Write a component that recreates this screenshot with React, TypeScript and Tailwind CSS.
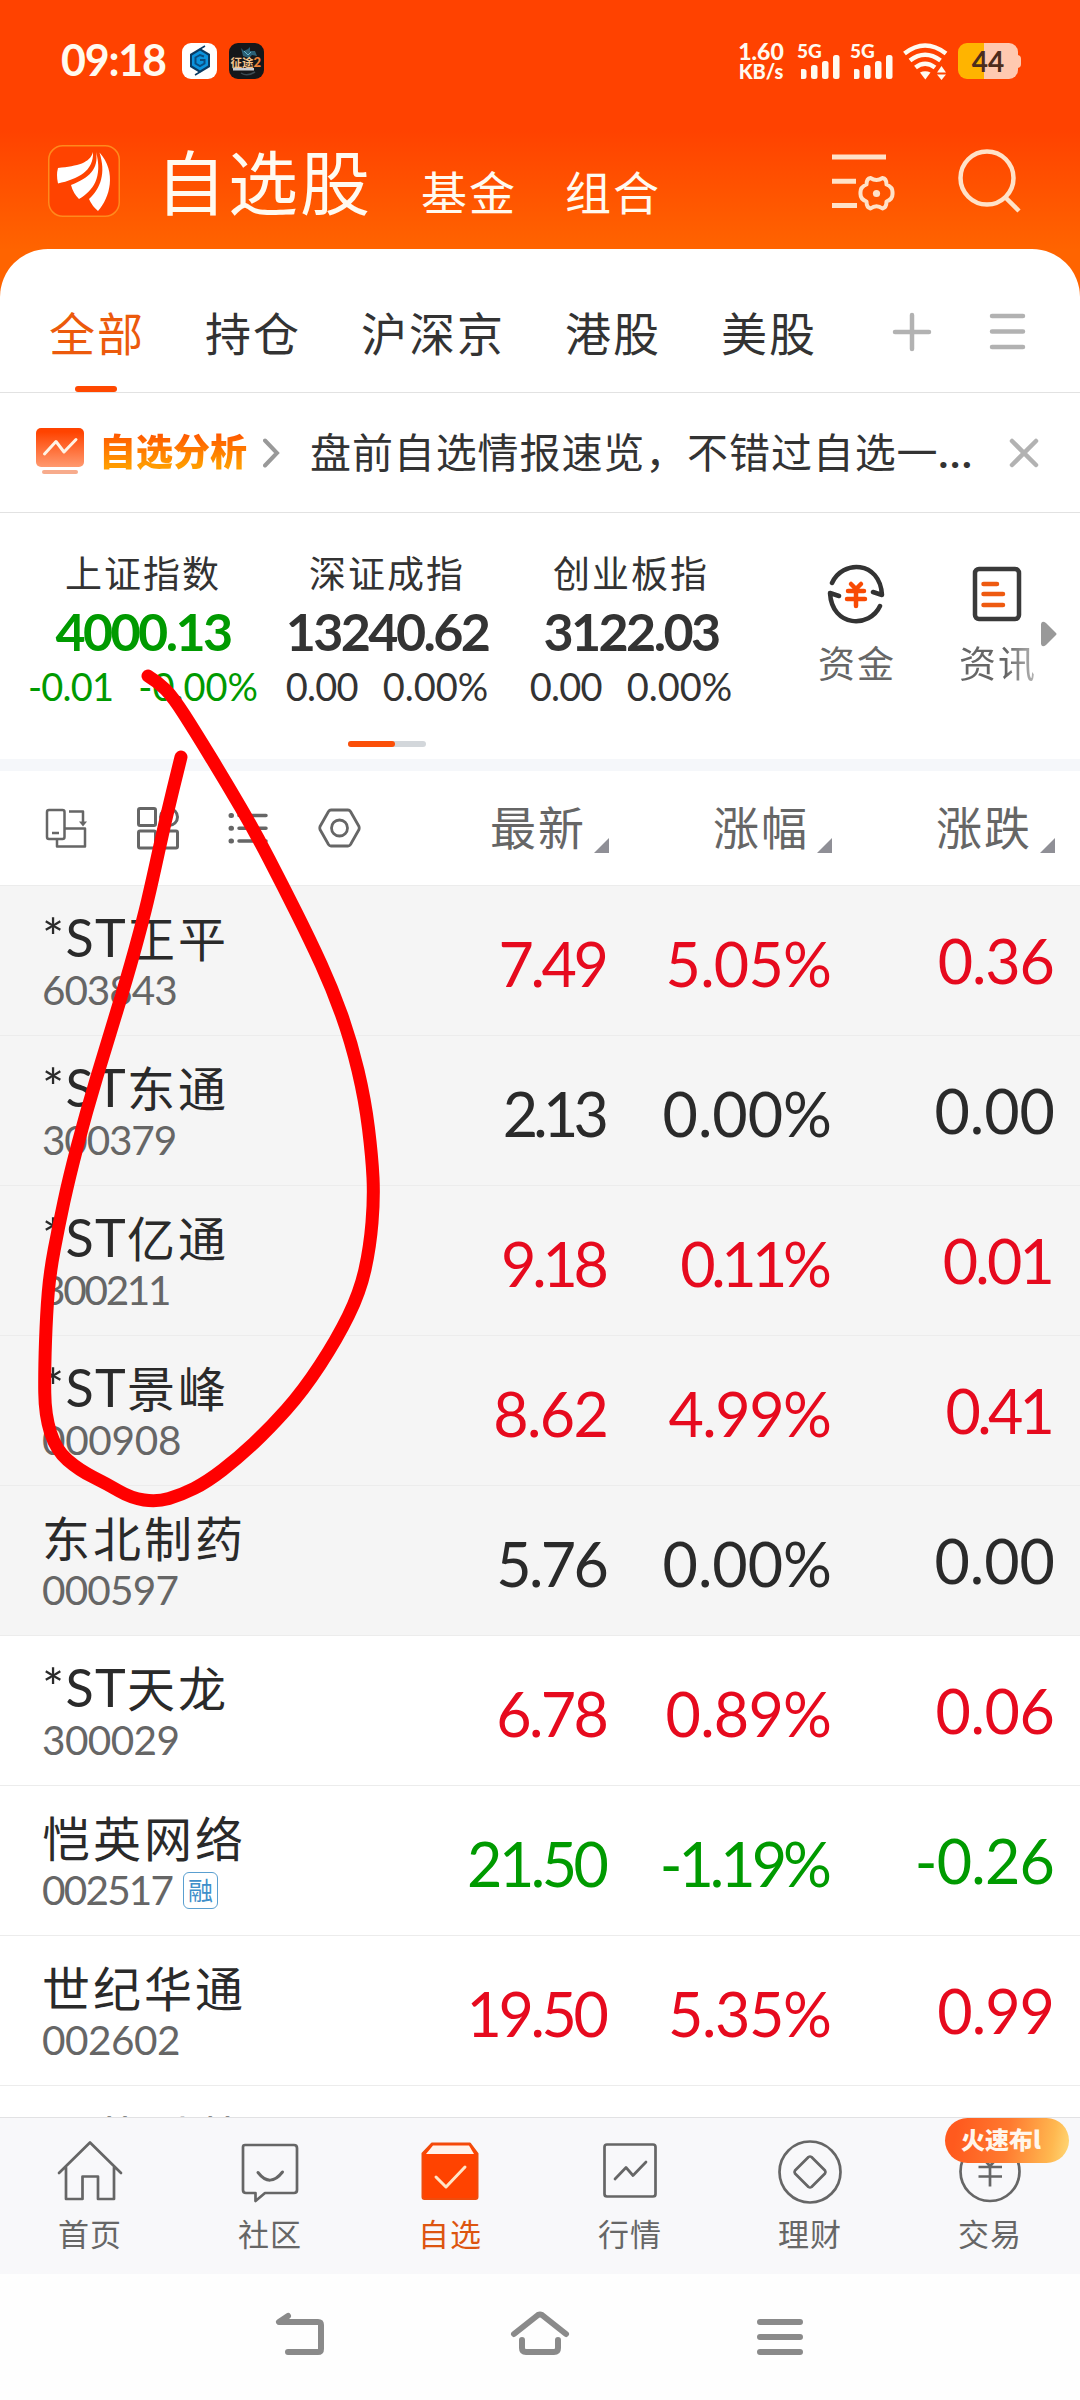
import { ReactNode } from 'react';
import clsx from 'clsx';

interface Quote {
  name: string;
  code: string;
  price: string;
  percent: string;
  change: string;
  trend: 'up' | 'down' | 'flat';
  pinned?: boolean;
  margin?: boolean;
}

const quotes: Quote[] = [
  { name: '*ST正平', code: '603843', price: '7.49', percent: '5.05%', change: '0.36', trend: 'up', pinned: true },
  { name: '*ST东通', code: '300379', price: '2.13', percent: '0.00%', change: '0.00', trend: 'flat', pinned: true },
  { name: '*ST亿通', code: '300211', price: '9.18', percent: '0.11%', change: '0.01', trend: 'up', pinned: true },
  { name: '*ST景峰', code: '000908', price: '8.62', percent: '4.99%', change: '0.41', trend: 'up', pinned: true },
  { name: '东北制药', code: '000597', price: '5.76', percent: '0.00%', change: '0.00', trend: 'flat', pinned: true },
  { name: '*ST天龙', code: '300029', price: '6.78', percent: '0.89%', change: '0.06', trend: 'up' },
  { name: '恺英网络', code: '002517', price: '21.50', percent: '-1.19%', change: '-0.26', trend: 'down', margin: true },
  { name: '世纪华通', code: '002602', price: '19.50', percent: '5.35%', change: '0.99', trend: 'up' },
];

const indices = [
  { name: '上证指数', value: '4000.13', change: '-0.01', percent: '-0.00%', color: 'text-[#009a00]' },
  { name: '深证成指', value: '13240.62', change: '0.00', percent: '0.00%', color: 'text-[#333333]' },
  { name: '创业板指', value: '3122.03', change: '0.00', percent: '0.00%', color: 'text-[#333333]' },
];

const trendColor = {
  up: 'text-[#e60a1e]',
  down: 'text-[#009a00]',
  flat: 'text-[#2a2a2a]',
};

const NUM = "font-['Lato','Noto_Sans_CJK_SC',sans-serif]";

// Lato digits are tabular, so tighten values that hold narrow digits (in em)
const narrow: Record<string, number> = {
  '1': 0.18, '7': 0.1, '4': 0.06, '3': 0.05, '2': 0.04, '5': 0.03, '8': 0.03, '9': 0.03, '6': 0.02,
};

function digitSpacing(value: string) {
  let sum = 0;
  for (const ch of value) sum += narrow[ch] ?? 0;
  return sum / value.length;
}

function Digits({ value, className, scale = 1 }: { value: string; className?: string; scale?: number }) {
  const em = digitSpacing(value) * scale;
  return (
    <span className={className} style={{ letterSpacing: `${-em}em`, paddingRight: `${em}em` }}>
      {value}
    </span>
  );
}

// points of the hand-drawn marker loop
const loop = [
  [148, 676], [158, 682], [173, 697], [196, 733], [227, 784], [255, 832], [283, 886], [310, 940], [332, 988], [351, 1041],
  [365, 1100], [372, 1157], [374, 1198], [370, 1247], [360, 1292], [337, 1339], [303, 1391], [269, 1429], [238, 1458],
  [207, 1482], [181, 1495], [157, 1502], [131, 1498], [107, 1484], [79, 1470], [56, 1450], [45, 1415], [44.500, 1370],
  [46.5, 1313], [50, 1272], [58.5, 1227], [69, 1178], [86, 1113], [107, 1043], [127, 978], [143, 920], [152, 882],
  [165, 822], [181, 757],
];

function smooth(points: number[][]) {
  let d = `M${points[0][0]} ${points[0][1]}`;
  for (let i = 1; i < points.length - 1; i++) {
    const [x, y] = points[i];
    const [nx, ny] = points[i + 1];
    d += ` Q${x} ${y} ${(x + nx) / 2} ${(y + ny) / 2}`;
  }
  const last = points[points.length - 1];
  return `${d} L${last[0]} ${last[1]}`;
}

function Signal() {
  return (
    <div className="relative w-[42px] h-[36px]">
      <span className={`absolute left-[-4px] top-0 text-[19px] leading-[15px] font-black ${NUM}`}>5G</span>
      <svg className="absolute inset-0" width="42" height="36" viewBox="0 0 42 36" fill="currentColor">
        <rect x="-1" y="26" width="6.500" height="10" rx="2.500" />
        <rect x="10" y="22" width="6.500" height="14" rx="2.500" />
        <rect x="21" y="18" width="6.500" height="18" rx="2.500" />
        <rect x="32" y="12" width="6.500" height="24" rx="2.500" />
      </svg>
    </div>
  );
}

function StatusBar() {
  return (
    <div className="h-[122px] pl-[61px] pr-[62px] flex items-center text-[#fffaf0]">
      <span className={`w-[121px] pb-1 text-[43px] leading-none tracking-[-1.200px] font-bold ${NUM}`}>09:18</span>
      <svg width="35" height="36" viewBox="0 0 35 36">
        <rect width="35" height="36" rx="9" fill="#fff" />
        <path d="M18 5 L28 11 V24 L18 30 L8 24 V11 Z" fill="#0a3b63" />
        <path d="M18 7.500 L26 12.500 V22.500 L18 27.500 L10 22.500 V12.500 Z" fill="#0b93dd" />
        <path d="M22 13.500 L18 12 L13.500 14.500 V20.500 L18 23 L22.500 20.500 V17 H18" fill="none" stroke="#0a4d80" strokeWidth="2" />
        <path d="M23 3 L18 6 M13 32 L18 29" stroke="#0a3b63" strokeWidth="1.500" />
      </svg>
      <svg className="ml-3" width="35" height="36" viewBox="0 0 35 36">
        <rect width="35" height="36" rx="9" fill="#15171a" />
        <path d="M12 5 L15 8 L19 6 L21 4 L21 8 L26 8 L28 13 L23 12 L20 15 L14 13 Z" fill="#2b6076" />
        <path d="M15 8 L19 12 L22 9" stroke="#69b6cf" fill="none" />
        <path d="M12 30 Q18 34 26 29" stroke="#3b4a52" strokeWidth="1.500" fill="none" />
        <text x="1.500" y="24" fontSize="11.500" fontWeight="700" fill="#f3c48c" fontFamily="Noto Sans CJK SC">征途</text>
        <text x="24.500" y="24" fontSize="13" fontWeight="900" fill="#f08238" fontFamily="Lato">2</text>
        <rect x="4" y="25" width="21" height="2.500" fill="#c9ccd0" />
      </svg>
      <div className={`ml-auto w-[62px] text-center text-[23px] leading-[20px] font-black ${NUM}`}>
        <div>1.60</div>
        <div className="text-[20px]">KB/s</div>
      </div>
      <div className="ml-[9px]"><Signal /></div>
      <div className="ml-[11px]"><Signal /></div>
      <svg className="mr-[2px] ml-[7px]" width="45" height="37" viewBox="0 0 45 37" fill="none" stroke="currentColor" strokeWidth="4.500">
        <path d="M1.500 10.500 Q22 -5.500 43 10.500" />
        <path d="M7 17.500 Q22 6 37.500 17.500" />
        <path d="M12.500 24.500 Q22 17 32 24.500" />
        <path d="M17 29.500 Q22 27 27.500 29.500 L22.300 36.500 Z" fill="currentColor" stroke="none" />
        <path d="M38.500 23 L43 29.500 H34 Z M38.500 37 L43 31.500 H34 Z" fill="currentColor" stroke="none" />
      </svg>
      <div className="relative ml-2 w-[60px] h-[36px] rounded-[9px] bg-[linear-gradient(90deg,#ffb400_26px,#ffc9b0_26px)] flex items-center justify-center">
        <span className={`text-[28px] leading-none font-bold text-[#4d2d1c] ${NUM}`}>44</span>
        <span className="absolute right-[-3px] top-3 w-[4px] h-[13px] rounded-r bg-[#ffc9b0]" />
      </div>
    </div>
  );
}

function Header() {
  return (
    <div className="h-[127px] px-12 flex text-[#fffaf0]">
      <svg className="mt-[23px]" width="72" height="72" viewBox="0 0 72 72">
        <rect x="0.750" y="0.750" width="70.500" height="70.500" rx="14" fill="#ff4300" stroke="#ff8a1c" strokeWidth="1.500" />
        <path d="M45 7 C42 18 30 21 10 23 Q8 30 10 38.500 C30 34 46 26 45 7 Z" fill="#fff" />
        <path d="M48 7 C51 24 41 33 23 40 Q25 48 31 54 C45 46 55 32 48 7 Z" fill="#fff" />
        <path d="M51.500 7.500 C58 28 53 43 41 54 Q44 61 50 66 C62 53 69 27 51.500 7.500 Z" fill="#fff" />
      </svg>
      <div className="ml-[36px] mt-[22px] w-[217px] text-[70px] leading-[72px] tracking-[2px]">自选股</div>
      <div className="ml-[48px] mt-[44px] text-[46px] leading-[48px] tracking-[2px] flex gap-[48px]">
        <span>基金</span>
        <span>组合</span>
      </div>
      <svg className="ml-auto mt-[31px]" width="64" height="60" viewBox="0 0 64 60" fill="none" stroke="#ffe2c8" strokeWidth="5">
        <path d="M1 4 H55 M1 28.300 H25 M1 52.500 H26" />
        <path
          d="M39.500 25 Q45.500 29 51.500 25 Q55.500 25.500 55.500 31.500 Q62 34 61.500 40 Q62 46 55.500 48.500 Q55.500 54.500 51.500 55.500 Q45.500 51 39.500 55.500 Q35.500 54.500 35.500 48.500 Q29 46 29.500 40 Q29 34 35.500 31.500 Q35.500 25.500 39.500 25 Z"
          strokeWidth="4"
          strokeLinejoin="round"
        />
        <circle cx="45.500" cy="40.500" r="3.600" fill="#ffe2c8" stroke="none" />
      </svg>
      <svg className="ml-[63px] mt-[27px] mr-[10px]" width="64" height="64" viewBox="0 0 64 64" fill="none" stroke="#ffe2c8" strokeWidth="4.500">
        <circle cx="29" cy="29" r="26.500" />
        <path d="M47 48 L61 62" />
      </svg>
    </div>
  );
}

function Tabs() {
  return (
    <div className="h-[144px] border-b border-[#e2e2e2] pl-[49px] pt-[58px] flex items-start gap-[60px] text-[46px] leading-[48px] tracking-[2px] text-[#333333]">
      <div className="relative text-[#ec5a0c]">
        全部
        <span className="absolute left-[26px] top-[79px] w-[42px] h-[6px] rounded-full bg-[#ff4800]" />
      </div>
      <div>持仓</div>
      <div>沪深京</div>
      <div>港股</div>
      <div>美股</div>
      <svg className="ml-[15px] mt-[5px]" width="40" height="40" viewBox="0 0 40 40" stroke="#b2b2b2" strokeWidth="4.500" strokeLinecap="round">
        <path d="M3 20 H37 M20 3 V37" />
      </svg>
      <svg className="ml-[-4px] mt-[5px]" width="40" height="40" viewBox="0 0 40 40" stroke="#b2b2b2" strokeWidth="4.500" strokeLinecap="round">
        <path d="M4 4 H35 M4 19.500 H35 M4 35 H35" />
      </svg>
    </div>
  );
}

function AnalysisBar() {
  return (
    <div className="h-[120px] border-b border-[#e2e2e2] pl-9 pr-[41px] flex items-center">
      <svg className="mb-[3px]" width="48" height="47" viewBox="0 0 48 47">
        <defs>
          <linearGradient id="chartFill" x1="0" y1="0" x2="0" y2="1">
            <stop offset="0.1" stopColor="#ff4300" />
            <stop offset="1" stopColor="#ff9a70" />
          </linearGradient>
        </defs>
        <rect x="0" y="0" width="48" height="39" rx="5" fill="url(#chartFill)" />
        <path d="M8.500 26 L20 13.500 L28 24 L40 11.500" fill="none" stroke="#fff3e6" strokeWidth="3" strokeLinecap="round" strokeLinejoin="round" />
        <rect x="6" y="42" width="36" height="4" rx="2" fill="#f7ab8c" />
      </svg>
      <div className="ml-[15px] pb-[6px] w-[150px] text-[37px] leading-[46px] font-black whitespace-nowrap bg-[linear-gradient(180deg,#ff5500_10%,#ff9c00_75%)] bg-clip-text text-transparent">
        自选分析
      </div>
      <svg className="ml-[14px]" width="18" height="30" viewBox="0 0 18 30" fill="none" stroke="#999999" strokeWidth="4">
        <path d="M2 2.500 L14 15 L2 27.500" strokeLinecap="round" />
      </svg>
      <div className="ml-[29px] pb-[3px] text-[41px] tracking-[0.900px] leading-none text-[#333333] whitespace-nowrap">
        盘前自选情报速览，不错过自选一<span className="tracking-[2px] font-bold font-['Lato']">...</span>
      </div>
      <svg className="ml-auto" width="30" height="30" viewBox="0 0 30 30" stroke="#b2b2b2" strokeWidth="4.500" strokeLinecap="round">
        <path d="M3 3 L27 27 M27 3 L3 27" />
      </svg>
    </div>
  );
}

function IndexBoard() {
  return (
    <div className="relative h-[246px] pl-[21px] flex">
      {indices.map((item) => (
        <div key={item.name} className="w-[244px] pt-[39px] flex flex-col items-center whitespace-nowrap">
          <div className="text-[37px] leading-[40px] tracking-[2px] text-[#333333]">{item.name}</div>
          <div className={clsx('mt-[14px] text-[52px] leading-[50px] tracking-[-2.600px] font-bold', NUM, item.color)}>{item.value}</div>
          <div className={clsx('mt-[10px] text-[38px] leading-[40px] flex gap-[25px]', NUM, item.color)}>
            <span className="tracking-[-0.800px]">{item.change}</span>
            <span>{item.percent}</span>
          </div>
        </div>
      ))}
      <div className="ml-[64px] pt-[51px] w-[78px] flex flex-col items-center text-[37px] leading-[40px] tracking-[2px] whitespace-nowrap text-[#666666]">
        <svg width="60" height="60" viewBox="0 0 60 60" fill="none" stroke="#333333" strokeWidth="4.500" strokeLinecap="round" strokeLinejoin="round">
          <path d="M6 19 C16 -4 54 -4 56 31 L47 28" />
          <path d="M54 42 C44 64 6 64 4 29 L13 32" />
          <path d="M25 20 L30 25 L35 20 M22 27 H38 M21 35 H39 M30 25 V42" stroke="#f84a04" />
        </svg>
        <span className="mt-[18px] ml-[2px]">资金</span>
      </div>
      <div className="ml-[63px] pt-[51px] w-[78px] flex flex-col items-center text-[37px] leading-[40px] tracking-[2px] whitespace-nowrap">
        <svg width="60" height="60" viewBox="0 0 60 60" fill="none" stroke="#3a3a3a" strokeWidth="4.500" strokeLinecap="round">
          <rect x="8" y="5" width="44" height="50" rx="4" />
          <path d="M16.500 20 H30 M16.500 30 H36 M16.500 41 H36" stroke="#ee5a10" />
        </svg>
        <span className="mt-[18px] ml-[2px] bg-[linear-gradient(90deg,#666666_60%,#bbbbbb)] bg-clip-text text-transparent">资讯</span>
      </div>
      <svg className="ml-[5px] mt-[108px]" width="16" height="26" viewBox="0 0 16 26">
        <path d="M0 3 Q1 -1 5 2 L15 12 Q16 13 15 14 L5 24 Q1 27 0 23 Z" fill="#999999" />
      </svg>
      <div className="absolute left-[348px] top-[228px] w-[78px] h-[6px] rounded-full bg-[#d3d7db]">
        <div className="w-[47px] h-[6px] rounded-full bg-[#fb4f08]" />
      </div>
    </div>
  );
}

function SortLabel({ children }: { children: ReactNode }) {
  return (
    <div className="w-[223px] flex justify-end text-[46px] leading-[48px] tracking-[2px] text-[#666666]">
      <span className="mt-[-3px]">{children}</span>
      <svg className="ml-[8px] mt-[34px]" width="15" height="15" viewBox="0 0 15 15">
        <path d="M15 0 V15 H0 Z" fill="#8f8f96" />
      </svg>
    </div>
  );
}

function TableHeader() {
  return (
    <div className="h-[115px] border-b border-[#ececec] pl-[45px] pr-[25px] flex items-center">
      <div className="flex gap-[48px]">
        <svg width="43" height="44" viewBox="0 0 43 44" fill="none" stroke="#666666" strokeWidth="2.500" strokeLinejoin="round">
          <rect x="2" y="4" width="17.500" height="29" rx="2" />
          <path d="M7 27 H14 M24 5.500 H38 V18" />
          <path d="M34 15.500 H42 L38 20.500 Z" fill="#666666" stroke="none" />
          <path d="M19.500 22.500 H40 V40.500 H12 V33" />
        </svg>
        <svg width="43" height="44" viewBox="0 0 43 44" fill="none" stroke="#666666" strokeWidth="3">
          <rect x="2.500" y="2.500" width="17" height="17" rx="1.500" />
          <circle cx="33" cy="11" r="8.500" />
          <rect x="2.500" y="25" width="17" height="17" rx="1.500" />
          <rect x="24.500" y="25" width="17" height="17" rx="1.500" />
        </svg>
        <svg width="43" height="44" viewBox="0 0 43 44" fill="none" stroke="#666666" strokeWidth="3.500" strokeLinecap="round">
          <path d="M12 9.500 H39 M12 22.300 H39 M12 35 H39" />
          <path d="M4 9.500 h0.500 M4 22.300 h0.500 M4 35 h0.500" strokeWidth="5" />
        </svg>
        <svg width="43" height="44" viewBox="0 0 43 44" fill="none" stroke="#666666" strokeWidth="2.800" strokeLinejoin="round">
          <path d="M13 4 H30 Q31.500 4 32.500 5.500 L41 20.500 Q41.500 22 41 23.500 L32.500 38.500 Q31.500 40 30 40 H13 Q11.500 40 10.500 38.500 L2 23.500 Q1.500 22 2 20.500 L10.500 5.500 Q11.500 4 13 4 Z" />
          <circle cx="21.500" cy="22" r="8" />
        </svg>
      </div>
      <div className="ml-auto flex">
        <SortLabel>最新</SortLabel>
        <SortLabel>涨幅</SortLabel>
        <SortLabel>涨跌</SortLabel>
      </div>
    </div>
  );
}

function QuoteRow({ quote }: { quote: Quote }) {
  return (
    <div className={clsx('h-[150px] shrink-0 border-b border-[#ececec] pl-[42px] pr-[25px] flex', quote.pinned ? 'bg-[#f5f5f5]' : 'bg-white')}>
      <div className="flex-1 pt-[23px]">
        <div className="h-[54px] text-[48px] leading-[54px] tracking-[3px] text-[#2a2a2a] whitespace-nowrap">
          {quote.name.startsWith('*ST') && <span className={`text-[52px] tracking-[1.300px] ${NUM}`}>*ST</span>}
          {quote.name.replace('*ST', '')}
        </div>
        <div className="mt-[6px] h-[42px] flex items-center text-[#666666]">
          <Digits value={quote.code} scale={0.75} className={`text-[40.500px] leading-[42px] ${NUM}`} />
          {quote.margin && (
            <span className="ml-[9px] w-[35px] h-[37px] rounded-md border border-[#5a9fd0] text-[25px] leading-[32px] text-center text-[#3f8fca]">融</span>
          )}
        </div>
      </div>
      <div className={clsx('flex text-right text-[61px] leading-[70px] pt-[43px]', NUM, trendColor[quote.trend])}>
        <Digits className="w-[223px]" scale={1.15} value={quote.price} />
        <Digits className="w-[223px]" value={quote.percent} />
        <Digits className="w-[223px] mt-[-3px]" value={quote.change} />
      </div>
    </div>
  );
}

function NavItem({ label, active, children }: { label: string; active?: boolean; children: ReactNode }) {
  return (
    <div className={clsx('relative w-[180px] pt-[20px] flex flex-col items-center', active ? 'text-[#dd5510]' : 'text-[#666666]')}>
      <svg width="68" height="68" viewBox="0 0 68 68" fill="none" stroke="currentColor" strokeWidth="2.700" strokeLinejoin="round" strokeLinecap="round">
        {children}
      </svg>
      <span className="mt-[11px] text-[31px] leading-[32px] tracking-[1px]">{label}</span>
    </div>
  );
}

function BottomNav() {
  return (
    <div className="relative h-[157px] border-t border-[#e2e2e4] bg-[#f8f8fa] flex">
      <NavItem label="首页">
        <path d="M3 35 L34 4.500 L65 35 M10 29.500 V61 H26.500 V38.500 H42 V61 H58 V29.500" />
      </NavItem>
      <NavItem label="社区">
        <path d="M9 7 H58 Q61 7 61 10 V52 Q61 55 58 55 H29 L19.500 63 V55 H10 Q7 55 7 52 V9 Q7 7 9 7 Z" />
        <path d="M22 34.500 Q34 50 46.500 34" strokeWidth="3" />
      </NavItem>
      <NavItem label="自选" active>
        <path d="M16 5.500 H54 L61.500 15.500 V59 Q61.500 61 59.500 61 H8.500 Q6.500 61 6.500 59 V15.500 Z" fill="#ff4300" stroke="#f04c0c" strokeWidth="2" />
        <path d="M17 7.500 H53 L58 16 H10 Z" fill="#fff3ea" stroke="none" />
        <path d="M20 39 L30 49 L49 29" stroke="#ffe5c6" strokeWidth="3" />
      </NavItem>
      <NavItem label="行情">
        <rect x="8.500" y="6.500" width="51" height="52" rx="2.500" />
        <path d="M19 41 L30 29.500 L37 37.500 L50 24" />
      </NavItem>
      <NavItem label="理财">
        <circle cx="34" cy="34" r="30.500" />
        <path d="M35.500 19 L49 32.500 Q50 34 49 35.500 L35.500 49 Q34 50 32.500 49 L19 35.500 Q18 34 19 32.500 L32.500 19 Q34 18 35.500 19 Z" />
      </NavItem>
      <NavItem label="交易">
        <circle cx="34" cy="33.500" r="29.500" />
        <path d="M24 17 L34 28 L44 17 M22.500 29 H46 M22.500 38.500 H46 M34 28 V48.500" strokeLinecap="butt" />
      </NavItem>
      <div className="absolute left-[945px] top-0 w-[124px] h-[45px] rounded-full bg-[linear-gradient(100deg,#ff5a1e_10%,#ff7a30_50%,#ffb850_85%,#ffd978)] pl-[16px] text-[24px] leading-[42px] font-black text-[#fff6ec] whitespace-nowrap">
        火速布l
      </div>
    </div>
  );
}

function SystemNav() {
  return (
    <div className="h-[126px] pt-[2px] bg-[#fefefe] flex justify-center items-center gap-[180px]">
      <svg width="60" height="60" viewBox="0 0 60 60" fill="none" stroke="#8a8a8a" strokeWidth="6" strokeLinecap="round" strokeLinejoin="round">
        <path d="M18 8 L9 14 H48 Q51 14 51 17 V41 Q51 44 48 44 H18" />
      </svg>
      <svg width="60" height="60" viewBox="0 0 60 60" fill="none" stroke="#8a8a8a" strokeWidth="6" strokeLinecap="round" strokeLinejoin="round">
        <path d="M4 26 L28 7 Q30 6 32 7 L56 26 M12 32 V40 Q12 44 16 44 H44 Q48 44 48 40 V32" />
      </svg>
      <svg width="60" height="60" viewBox="0 0 60 60" fill="none" stroke="#8a8a8a" strokeWidth="6" strokeLinecap="round">
        <path d="M10 14 H50 M10 29 H50 M10 44 H50" />
      </svg>
    </div>
  );
}

export default function App() {
  return (
    <div className="relative w-[1080px] h-[2400px] overflow-hidden flex flex-col bg-[linear-gradient(180deg,#ff4200_130px,#ff6400_250px)] font-['Noto_Sans_CJK_SC',sans-serif]">
      <StatusBar />
      <Header />
      <div className="flex-1 min-h-0 flex flex-col bg-white rounded-t-[48px]">
        <Tabs />
        <AnalysisBar />
        <IndexBoard />
        <div className="h-3 shrink-0 bg-[#f5f7fa]" />
        <TableHeader />
        <div className="h-[1231px] overflow-hidden flex flex-col">
          {quotes.map((quote) => (
            <QuoteRow key={quote.code} quote={quote} />
          ))}
          <div className="shrink-0 pl-[42px] pt-[23px] text-[48px] leading-[54px] tracking-[3px] text-[#2a2a2a]">三花时英</div>
        </div>
      </div>
      <BottomNav />
      <SystemNav />

      <svg className="absolute inset-0 pointer-events-none" width="1080" height="2400" viewBox="0 0 1080 2400" fill="none">
        <path d={smooth(loop)} stroke="#ff0000" strokeWidth="13" strokeLinecap="round" strokeLinejoin="round" />
      </svg>
    </div>
  );
}
